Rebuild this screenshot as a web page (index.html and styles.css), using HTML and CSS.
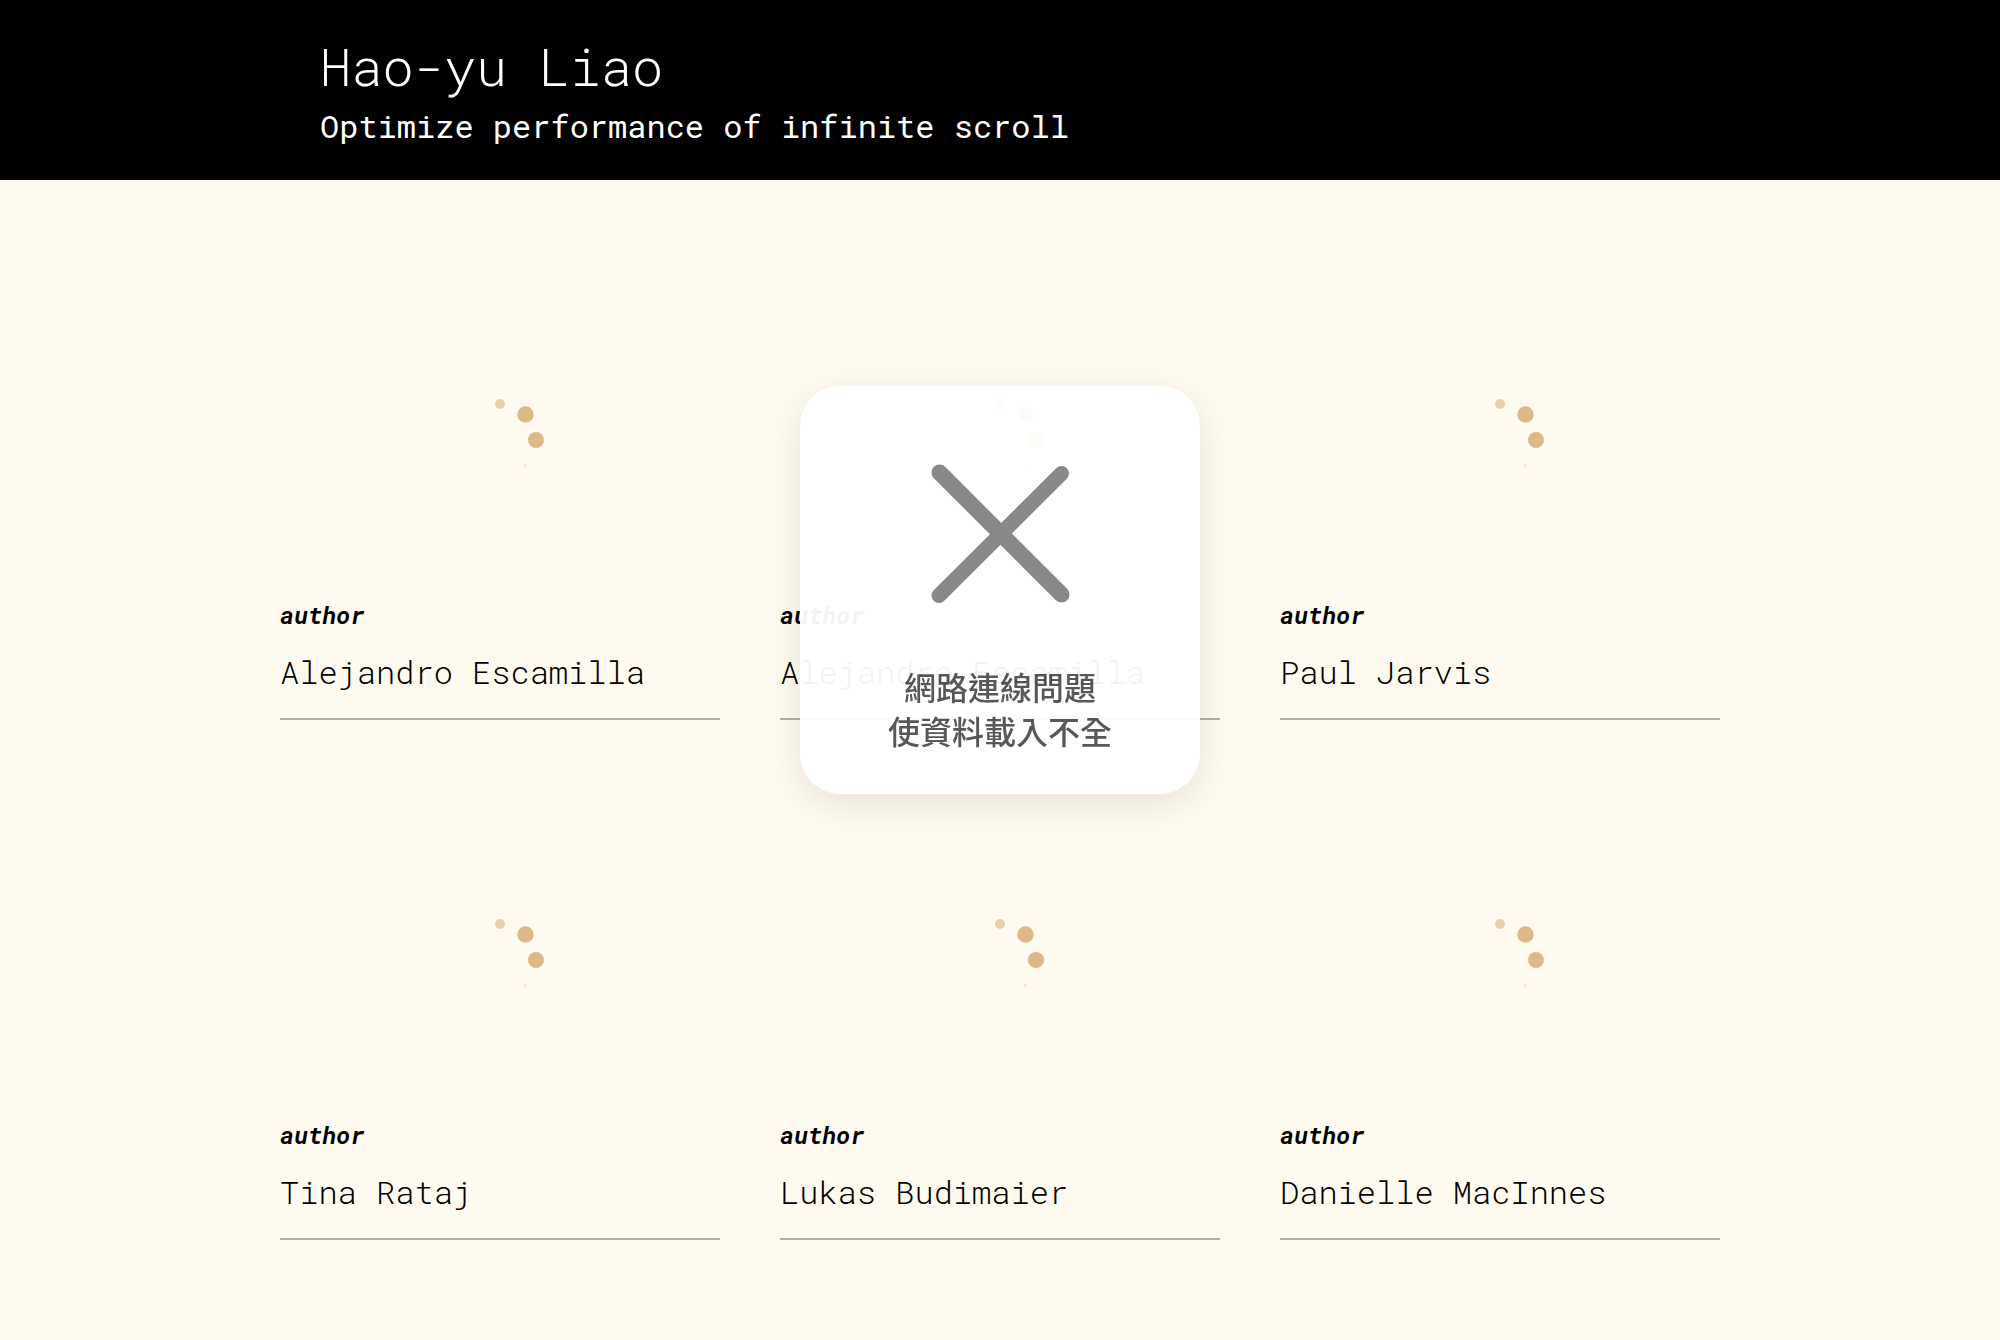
FILE: index.html
```html
<!DOCTYPE html>
<html lang="zh-Hant">
<head>
<meta charset="utf-8">
<meta name="viewport" content="width=device-width, initial-scale=1">
<title>Hao-yu Liao</title>
<link rel="stylesheet" href="styles.css">
</head>
<body>
<svg width="0" height="0" class="sprite" aria-hidden="true">
  <symbol id="spinner" viewBox="0 0 100 100">
    <circle cx="50" cy="14" r="5" opacity=".65"/>
    <circle cx="75.500" cy="24.500" r="8.2"/>
    <circle cx="86" cy="50" r="8"/>
    <circle cx="75.500" cy="75.500" r="1.6" opacity=".3"/>
  </symbol>
</svg>
<header class="header">
  <div class="header-inner">
    <h1 class="title">Hao-yu Liao</h1>
    <p class="subtitle">Optimize performance of infinite scroll</p>
  </div>
</header>
<main class="gallery">
  <article class="card">
    <div class="photo"><svg class="spinner"><use href="#spinner"/></svg></div>
    <h2 class="label">author</h2>
    <p class="name">Alejandro Escamilla</p>
  </article>
  <article class="card">
    <div class="photo"><svg class="spinner"><use href="#spinner"/></svg></div>
    <h2 class="label">author</h2>
    <p class="name">Alejandro Escamilla</p>
  </article>
  <article class="card">
    <div class="photo"><svg class="spinner"><use href="#spinner"/></svg></div>
    <h2 class="label">author</h2>
    <p class="name">Paul Jarvis</p>
  </article>
  <article class="card">
    <div class="photo"><svg class="spinner"><use href="#spinner"/></svg></div>
    <h2 class="label">author</h2>
    <p class="name">Tina Rataj</p>
  </article>
  <article class="card">
    <div class="photo"><svg class="spinner"><use href="#spinner"/></svg></div>
    <h2 class="label">author</h2>
    <p class="name">Lukas Budimaier</p>
  </article>
  <article class="card">
    <div class="photo"><svg class="spinner"><use href="#spinner"/></svg></div>
    <h2 class="label">author</h2>
    <p class="name">Danielle MacInnes</p>
  </article>
</main>
<div class="overlay">
  <div class="alert" role="alert">
    <svg class="cross" viewBox="0 0 140 140" aria-hidden="true">
      <path d="M9.500 8.500 131.500 130.500" stroke-width="16"/>
      <path d="M131.500 9.500 9 131.500" stroke-width="15"/>
    </svg>
    <p class="message">網路連線問題<br>使資料載入不全</p>
  </div>
</div>
</body>
</html>
```
FILE: styles.css
```css
* {
  box-sizing: border-box;
}

body {
  margin: 0;
  background: #fffaef;
  color: #000;
  font-family: "Roboto Mono", "Liberation Mono", "Noto Sans CJK TC", monospace;
  font-size: 32px;
}

h1, h2, p {
  margin: 0;
}

.sprite {
  position: absolute;
}

.header {
  background: #000;
  color: #fff;
  padding: 32px 40px;
}

.header-inner {
  max-width: 1360px;
  margin: 0 auto;
}

.title {
  margin-bottom: 4px;
  font-size: 52px;
  font-weight: 300;
  line-height: 68px;
}

.subtitle {
  line-height: 44px;
}

.gallery {
  display: grid;
  grid-template-columns: repeat(3, 1fr);
  gap: 100px 60px;
  max-width: 1440px;
  margin: 0 auto;
  padding: 120px 0 100px;
}

.card {
  border-bottom: 2px solid #b3afa7;
  padding-bottom: 24px;
}

.photo {
  display: flex;
  align-items: center;
  justify-content: center;
  height: 280px;
}

.spinner {
  width: 100px;
  height: 100px;
  fill: #deb887;
}

.label {
  margin-top: 19px;
  font-size: 24px;
  font-style: italic;
  line-height: 32px;
}

.name {
  margin-top: 19px;
  font-weight: 300;
  line-height: 44px;
}

.overlay {
  position: fixed;
  inset: 0;
  display: flex;
  align-items: center;
  justify-content: center;
  padding-bottom: 160px;
  pointer-events: none;
}

.alert {
  display: flex;
  flex-direction: column;
  align-items: center;
  gap: 60px;
  width: 400px;
  padding: 78px 40px 42px;
  border-radius: 40px;
  background: #fff;
  box-shadow: 0 10px 40px rgba(0, 0, 0, .1);
  opacity: .95;
}

.cross {
  width: 140px;
  height: 140px;
  fill: none;
  stroke: #828282;
  stroke-linecap: round;
}

.message {
  color: #505050;
  font-family: "Noto Sans CJK TC", sans-serif;
  font-weight: 500;
  line-height: 44px;
  text-align: center;
}
```
